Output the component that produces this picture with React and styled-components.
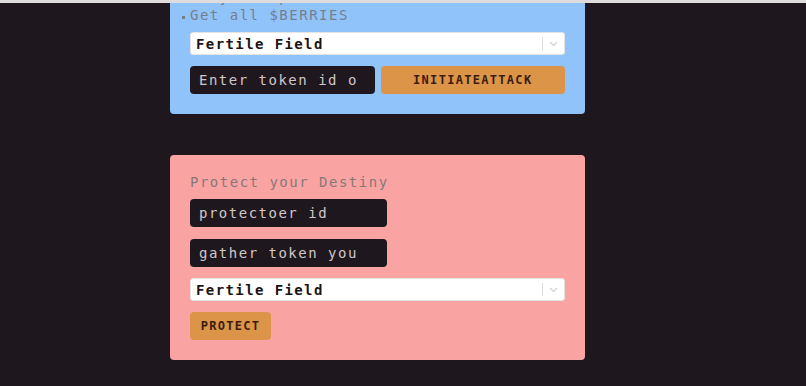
import React from "react";
import styled, { createGlobalStyle } from "styled-components";

const Global = createGlobalStyle`
  html, body { margin: 0; padding: 0; background: #1f171e; }
  body { font-family: "DejaVu Sans Mono", "Liberation Mono", monospace; overflow: hidden; }
  * { box-sizing: border-box; }
`;

const TopEdge = styled.div`
  position: fixed;
  top: 0;
  left: 0;
  right: 0;
  height: 3px;
  background: #dedcdd;
  z-index: 5;
`;

const Page = styled.div`
  width: 806px;
  height: 386px;
  overflow: hidden;
`;

const Scroller = styled.div`
  margin-top: -32px;
  padding-left: 170px;
  display: flex;
  flex-direction: column;
  gap: 41px;
`;

const Card = styled.section`
  width: 415px;
  padding: 20px;
  border-radius: 4px;
  background: ${(p) => p.$bg};
  display: flex;
  flex-direction: column;
`;

const List = styled.ul`
  margin: 0 0 8px;
  padding: 0;
  list-style: none;
`;

const Item = styled.li`
  position: relative;
  font-size: 14px;
  line-height: 18px;
  letter-spacing: 1.5px;
  color: #74808e;
  &::before {
    content: "";
    position: absolute;
    left: -8px;
    top: 10px;
    width: 3px;
    height: 3px;
    background: #74808e;
  }
`;

const Heading = styled.h3`
  margin: 0 0 10px;
  font-size: 14px;
  line-height: 14px;
  font-weight: normal;
  letter-spacing: 1.5px;
  color: #877877;
`;

const SelectBox = styled.div`
  height: 23px;
  background: #ffffff;
  border: 1px solid #e6e3e3;
  border-radius: 3px;
  display: flex;
  align-items: center;
  margin-top: ${(p) => p.$mt || 0}px;
`;

const SelectValue = styled.span`
  flex: 1;
  padding-left: 5px;
  font-size: 14px;
  font-weight: bold;
  letter-spacing: 1.4px;
  color: #1a1414;
`;

const Separator = styled.span`
  width: 1px;
  height: 13px;
  background: #dcdcdc;
`;

const Chevron = styled.span`
  width: 21px;
  display: flex;
  justify-content: center;
  align-items: center;
`;

const Row = styled.div`
  display: grid;
  grid-template-columns: 1fr 1fr;
  gap: 6px;
  margin-top: 11px;
`;

const Field = styled.div`
  height: 28px;
  width: ${(p) => (p.$w ? p.$w + "px" : "auto")};
  margin-top: ${(p) => p.$mt || 0}px;
  background: #1f171e;
  border-radius: 4px;
  display: flex;
  align-items: center;
  padding-left: 9px;
  font-size: 14px;
  letter-spacing: 1.5px;
  color: #cfc6c8;
  white-space: nowrap;
  overflow: hidden;
`;

const Button = styled.button`
  height: 28px;
  width: ${(p) => (p.$w ? p.$w + "px" : "auto")};
  margin-top: ${(p) => p.$mt || 0}px;
  border: none;
  border-radius: 4px;
  background: #dc9449;
  color: #3a1c0c;
  font-family: "DejaVu Sans Mono", "Liberation Mono", monospace;
  font-size: 12px;
  font-weight: bold;
  letter-spacing: 1.3px;
  padding: 0;
`;

const ChevronIcon = () => (
  <svg width="9" height="6" viewBox="0 0 9 6">
    <path d="M1 1l3.5 3.5L8 1" fill="none" stroke="#cfcfcf" strokeWidth="1.2" />
  </svg>
);

const Select = ({ mt }) => (
  <SelectBox $mt={mt}>
    <SelectValue>Fertile Field</SelectValue>
    <Separator />
    <Chevron>
      <ChevronIcon />
    </Chevron>
  </SelectBox>
);

export default function App() {
  return (
    <>
      <Global />
      <TopEdge />
      <Page>
        <Scroller>
          <Card $bg="#91c3fb">
            <List>
              <Item>They are protected</Item>
              <Item>Get all $BERRIES</Item>
            </List>
            <Select />
            <Row>
              <Field>Enter token id o</Field>
              <Button>INITIATEATTACK</Button>
            </Row>
          </Card>
          <Card $bg="#f9a4a3">
            <Heading>Protect your Destiny</Heading>
            <Field $w={197}>protectoer id</Field>
            <Field $w={197} $mt={12}>gather token you</Field>
            <Select mt={11} />
            <Button $w={81} $mt={11}>PROTECT</Button>
          </Card>
        </Scroller>
      </Page>
    </>
  );
}
